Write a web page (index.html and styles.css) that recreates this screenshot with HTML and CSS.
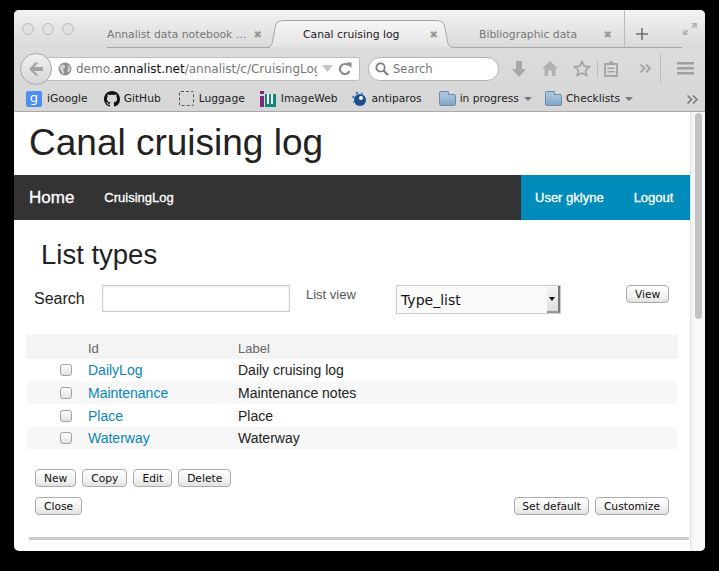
FILE: index.html
```html
<!DOCTYPE html>
<html lang="en">
<head>
    <meta charset="UTF-8">
    <meta name="viewport" content="width=device-width, initial-scale=1.0">
    <title>Canal cruising log</title>
    <link rel="stylesheet" href="styles.css">
</head>
<body>
    <div class="window">
        <div class="chrome">
            <!-- tab strip -->
            <div class="tabstrip">
                <div class="lights"><i></i><i></i><i></i></div>
                <div class="tab tab-first"><span class="tab-title">Annalist data notebook …</span><span class="tab-x">✖</span></div>
                <div class="tab tab-active">
                    <svg class="tab-shape" width="194" height="38" viewBox="0 0 194 38">
                        <defs><linearGradient id="tabfill" x1="0" y1="0" x2="0" y2="1"><stop offset="0" stop-color="#f6f6f6"/><stop offset="1" stop-color="#e4e4e4"/></linearGradient></defs>
                        <path d="M0 37.500H3C8 37.500 9 35 10 29L12 18C13.500 12 15 10.500 23 10.500H171C179 10.500 180.500 12 182 18L184 29C185 35 186 37.500 191 37.500H194" fill="url(#tabfill)" stroke="#a6a6a6"/>
                    </svg>
                    <span class="tab-title">Canal cruising log</span><span class="tab-x">✖</span>
                </div>
                <div class="tab tab-last"><span class="tab-title">Bibliographic data</span><span class="tab-x">✖</span></div>
                <div class="tab-new">
                    <svg width="12" height="12" viewBox="0 0 12 12"><path d="M6 0V12M0 6H12" stroke="#707070" stroke-width="1.600"/></svg>
                </div>
                <svg class="tab-resize" width="16" height="14" viewBox="0 0 16 14">
                    <path d="M9 1H15V6.500L13 4.500L11 6.500L9.500 5L11.500 3Z M1 13V7.500L3 9.500L5 7.500L6.500 9L4.500 11L6.500 13Z" fill="#b4b4b4"/>
                </svg>
            </div>

            <!-- nav bar -->
            <div class="navrow">
                <div class="backbtn">
                    <svg width="16" height="14" viewBox="0 0 16 14"><path d="M7.500 0.500L1 7L7.500 13.500H10.500L6 9H15V5H6L10.500 0.500Z" fill="#a2a2a2"/></svg>
                </div>
                <div class="urlbar">
                    <svg width="14" height="14" viewBox="0 0 14 14"><circle cx="7" cy="7" r="6.500" fill="#8e8e8e"/><path d="M3 3L6 2.500L7.500 5L5 7.500L6.500 10L5.500 12.500L3 9L1.500 6ZM9 3L12 4.500L12.500 8L10 11L9 8L10.500 6Z" fill="#d0d0d0"/></svg>
                    <span class="url"><span class="url-dim">demo.</span>annalist.net<span class="url-dim">/annalist/c/CruisingLog/d/_type/</span></span>
                    <svg class="url-drop" width="11" height="7" viewBox="0 0 11 7"><path d="M0 0H11L5.500 7Z" fill="#c4c4c4"/></svg>
                    <svg class="url-reload" width="14" height="14" viewBox="0 0 14 14"><path d="M11.500 9A5 5 0 1 1 10.500 3.500" fill="none" stroke="#8a8a8a" stroke-width="2.200"/><path d="M8 0.500H13.500V6Z" fill="#8a8a8a"/></svg>
                </div>
                <div class="searchbar">
                    <svg width="14" height="14" viewBox="0 0 14 14"><circle cx="5.500" cy="5.500" r="4.200" fill="none" stroke="#7c7c7c" stroke-width="1.700"/><path d="M8.500 8.500L13 13" stroke="#7c7c7c" stroke-width="2.200"/></svg>
                    <span>Search</span>
                </div>
                <svg class="ico ico-down" width="14" height="16" viewBox="0 0 14 16"><path d="M4 0H10V8H14L7 16L0 8H4Z" fill="#a8a8a8"/></svg>
                <svg class="ico ico-home" width="16" height="15" viewBox="0 0 16 15"><path d="M8 0L16 7.500H13.500V15H10V9.500H6V15H2.500V7.500H0Z" fill="#b0b0b0"/></svg>
                <svg class="ico ico-star" width="18" height="17" viewBox="0 0 18 17"><path d="M9 1.500L11.200 6.200L16.500 6.800L12.600 10.300L13.700 15.500L9 12.900L4.300 15.500L5.400 10.300L1.500 6.800L6.800 6.200Z" fill="none" stroke="#a4a4a4" stroke-width="1.700"/></svg>
                <span class="vsep vsep-short"></span>
                <svg class="ico ico-clip" width="14" height="16" viewBox="0 0 14 16"><path d="M1 3H13V15H1Z" fill="none" stroke="#a4a4a4" stroke-width="1.800"/><path d="M5 0.500H9V4H5ZM3.500 6.500H10.500V8H3.500ZM3.500 10H10.500V11.500H3.500Z" fill="#a4a4a4"/></svg>
                <svg class="ico ico-more" width="12" height="9" viewBox="0 0 12 9"><path d="M0.500 0.500L4.500 4.500L0.500 8.500M6 0.500L10 4.500L6 8.500" fill="none" stroke="#a4a4a4" stroke-width="1.800"/></svg>
                <span class="vsep vsep-tall"></span>
                <svg class="ico ico-menu" width="17" height="13" viewBox="0 0 17 13"><path d="M0 0H17V2.500H0ZM0 5H17V7.500H0ZM0 10H17V12.500H0Z" fill="#a0a0a0"/></svg>
            </div>

            <!-- bookmarks bar -->
            <div class="bookmarks">
                <span class="bm bm-google"><span class="g-icon">g</span>iGoogle</span>
                <span class="bm bm-github">
                    <svg width="16" height="16" viewBox="0 0 16 16"><path d="M8 0C3.580 0 0 3.580 0 8c0 3.540 2.290 6.530 5.470 7.590.4.070.55-.17.55-.38 0-.19-.01-.82-.01-1.490-2.010.37-2.530-.49-2.690-.94-.09-.23-.48-.94-.82-1.130-.28-.15-.68-.52-.01-.53.63-.01 1.080.58 1.230.82.72 1.210 1.870.87 2.330.66.070-.52.28-.87.51-1.070-1.780-.2-3.640-.89-3.640-3.950 0-.87.31-1.590.82-2.150-.08-.2-.36-1.020.08-2.120 0 0 .67-.21 2.200.82.64-.18 1.320-.27 2-.27.68 0 1.360.09 2 .27 1.530-1.040 2.200-.82 2.200-.82.44 1.100.16 1.920.08 2.120.51.56.82 1.270.82 2.150 0 3.070-1.870 3.750-3.650 3.950.29.25.54.73.54 1.480 0 1.070-.01 1.930-.01 2.200 0 .21.15.46.55.38A8.013 8.013 0 0016 8c0-4.420-3.580-8-8-8z" fill="#111"/></svg>
                    GitHub</span>
                <span class="bm bm-luggage"><i class="dash-icon"></i>Luggage</span>
                <span class="bm bm-imageweb">
                    <svg width="16" height="16" viewBox="0 0 16 16"><path d="M0 0H4V3H0ZM0 5H4V16H0Z" fill="#7d2a78"/><path d="M5 3H16V16H5Z" fill="#0f8a7a"/><path d="M7 3V13H9V3ZM11 3V13H13V3Z" fill="#fff"/></svg>
                    ImageWeb</span>
                <span class="bm bm-antiparos">
                    <svg width="16" height="16" viewBox="0 0 16 16"><circle cx="9" cy="9" r="6" fill="#1d4f8c"/><circle cx="2.500" cy="6" r="1.300" fill="#3f7cc0"/><circle cx="6" cy="2" r="1.300" fill="#3f7cc0"/><circle cx="11" cy="2.500" r="1" fill="#3f7cc0"/><circle cx="3" cy="11" r="1" fill="#3f7cc0"/><circle cx="10" cy="7" r="2" fill="#fff"/></svg>
                    antiparos</span>
                <span class="bm bm-folder1"><i class="folder"></i>in progress<i class="caret"></i></span>
                <span class="bm bm-folder2"><i class="folder"></i>Checklists<i class="caret"></i></span>
                <svg class="bm-more" width="12" height="9" viewBox="0 0 12 9"><path d="M0.500 0.500L4.500 4.500L0.500 8.500M6 0.500L10 4.500L6 8.500" fill="none" stroke="#777" stroke-width="1.500"/></svg>
            </div>
        </div>

        <div class="viewport">
            <div class="page">
                <h1 class="site-title">Canal cruising log</h1>

                <nav class="topbar">
                    <a class="home">Home</a>
                    <a class="coll">CruisingLog</a>
                    <div class="topbar-right">
                        <a class="user">User gklyne</a>
                        <a class="logout">Logout</a>
                    </div>
                </nav>

                <h2 class="page-title">List types</h2>

                <div class="search-row">
                    <label class="search-label">Search</label>
                    <input class="search-input" type="text">
                    <span class="view-label">List view</span>
                    <div class="select"><span>Type_list</span><i class="select-arrow"></i></div>
                    <button class="btn btn-view">View</button>
                </div>

                <div class="list">
                    <div class="row row-head"><span class="c-id">Id</span><span class="c-label">Label</span></div>
                    <div class="row"><i class="check"></i><a class="c-id">DailyLog</a><span class="c-label">Daily cruising log</span></div>
                    <div class="row row-alt row-tall"><i class="check"></i><a class="c-id">Maintenance</a><span class="c-label">Maintenance notes</span></div>
                    <div class="row row-tall"><i class="check"></i><a class="c-id">Place</a><span class="c-label">Place</span></div>
                    <div class="row row-alt"><i class="check"></i><a class="c-id">Waterway</a><span class="c-label">Waterway</span></div>
                </div>

                <div class="actions">
                    <button class="btn">New</button>
                    <button class="btn">Copy</button>
                    <button class="btn">Edit</button>
                    <button class="btn">Delete</button>
                </div>
                <div class="actions-2">
                    <button class="btn">Close</button>
                    <div class="actions-right">
                        <button class="btn btn-slim">Set default</button>
                        <button class="btn">Customize</button>
                    </div>
                </div>
                <div class="rule"></div>
            </div>
            <div class="scrollbar"><div class="thumb"></div></div>
        </div>
    </div>
</body>
</html>
```

FILE: styles.css
```css
html, body {
    margin: 0;
    padding: 0;
    background: #000;
    overflow: hidden;
}

body {
    height: 571px;
    font-family: 'Liberation Sans', Arial, sans-serif;
}

.window {
    width: 691px;
    height: 541px;
    margin: 10px 0 0 14px;
    border-radius: 5px;
    overflow: hidden;
    background: #fff;
}

/* browser chrome */
.chrome {
    height: 102px;
    box-sizing: border-box;
    border-bottom: 1px solid #aaa;
    background: linear-gradient(#f2f2f2, #dadada 37%, #dcdcdc 38%, #d6d6d6);
    font-family: 'DejaVu Sans', sans-serif;
    font-size: 11px;
    color: #333;
}

.tabstrip {
    display: flex;
    align-items: center;
    height: 38px;
    box-sizing: border-box;
    position: relative;
}

.lights {
    display: flex;
    gap: 8px;
    margin-left: 8px;
    width: 85px;
}

.lights i {
    width: 10px;
    height: 10px;
    border-radius: 50%;
    border: 1px solid #b9b9b9;
    background: #e2e2e2;
}

.tab {
    display: flex;
    align-items: center;
    height: 38px;
    box-sizing: border-box;
    padding-top: 11px;
    color: #777;
    position: relative;
    white-space: nowrap;
}

.tab-title {
    position: relative;
    font-size: 10.8px;
}

.tab-x {
    position: relative;
    font-size: 10px;
    color: #999;
    margin-left: auto;
}

.tab-first {
    width: 163px;
    padding-right: 8px;
    border-bottom: 1px solid #a6a6a6;
}

.tab-active {
    width: 194px;
    padding-left: 40px;
    padding-right: 19px;
    margin-left: -7px;
    color: #222;
}

.tab-shape {
    position: absolute;
    left: 0;
    top: 0;
}

.tab-last {
    width: 169px;
    padding-left: 23px;
    padding-right: 12px;
    margin-left: -1px;
    border-bottom: 1px solid #a6a6a6;
    border-right: 1px solid #bbb;
}

.tab-new {
    display: flex;
    align-items: center;
    height: 38px;
    box-sizing: border-box;
    padding: 10px 0 0 11px;
    width: 57px;
    border-bottom: 1px solid #a6a6a6;
}

.tab-resize {
    margin: 0;
}

.navrow {
    display: flex;
    align-items: center;
    box-sizing: border-box;
    height: 36px;
    padding-top: 5px;
}

.backbtn {
    display: flex;
    align-items: center;
    justify-content: center;
    box-sizing: border-box;
    flex: none;
    width: 32px;
    height: 32px;
    margin-left: 6px;
    border: 1px solid #a8a8a8;
    border-radius: 50%;
    background: linear-gradient(#f0f0f0, #d6d6d6);
    position: relative;
    z-index: 1;
}

.urlbar {
    display: flex;
    align-items: center;
    box-sizing: border-box;
    width: 313px;
    height: 24px;
    margin-left: -5px;
    padding-left: 10px;
    background: #fff;
    border: 1px solid #bcbcbc;
    border-radius: 0 3px 3px 0;
}

.url {
    width: 241px;
    margin-left: 4px;
    overflow: hidden;
    white-space: nowrap;
    font-size: 12px;
    color: #111;
}

.url-dim {
    color: #777;
}

.url-drop {
    margin-left: 5px;
}

.url-reload {
    margin-left: 5px;
}

.searchbar {
    display: flex;
    align-items: center;
    gap: 4px;
    box-sizing: border-box;
    width: 131px;
    height: 24px;
    margin-left: 8px;
    padding-left: 6px;
    background: #fff;
    border: 1px solid #b4b4b4;
    border-radius: 12px;
    font-size: 11.500px;
    color: #777;
}

.ico-down { margin-left: 13px; }
.ico-home { margin-left: 16px; }
.ico-star { margin-left: 15px; }
.ico-clip { margin-left: 6px; }
.ico-more { margin-left: 22px; }
.ico-menu { margin-left: 16px; }

.vsep {
    width: 1px;
    background: #bdbdbd;
}

.vsep-short {
    height: 18px;
    margin-left: 6px;
}

.vsep-tall {
    height: 31px;
    margin-left: 8px;
}

.bookmarks {
    display: flex;
    align-items: center;
    box-sizing: border-box;
    height: 27px;
    padding-top: 2px;
    position: relative;
    white-space: nowrap;
    font-size: 10.700px;
    color: #222;
}

.bm {
    display: flex;
    align-items: center;
    gap: 5px;
}

.bm-google { margin-left: 12px; }
.bm-github { margin-left: 16px; gap: 4px; }
.bm-luggage { margin-left: 18px; }
.bm-imageweb { margin-left: 15px; }
.bm-antiparos { margin-left: 13px; }
.bm-folder1 { margin-left: 17px; gap: 4px; }
.bm-folder2 { margin-left: 13px; gap: 4px; }

.g-icon {
    display: block;
    width: 16px;
    height: 16px;
    border-radius: 2px;
    background: #4b8df0;
    color: #fff;
    text-align: center;
    font-size: 13px;
    line-height: 14px;
}

.dash-icon {
    display: block;
    width: 13px;
    height: 13px;
    border: 1px dashed #555;
    border-radius: 2px;
}

.folder {
    display: block;
    width: 17px;
    height: 12px;
    margin-top: 2px;
    border: 1px solid #6e8daa;
    box-sizing: border-box;
    border-radius: 1px 2px 2px 2px;
    background: linear-gradient(#a9c5dd, #7fa5c6);
    position: relative;
}

.folder::before {
    content: "";
    position: absolute;
    left: -1px;
    top: -4px;
    width: 8px;
    height: 3px;
    border: 1px solid #6e8daa;
    border-bottom: none;
    border-radius: 2px 2px 0 0;
    background: #a9c5dd;
}

.caret {
    display: block;
    width: 0;
    height: 0;
    margin-left: 1px;
    border-left: 4px solid transparent;
    border-right: 4px solid transparent;
    border-top: 4px solid #777;
}

.bm-more {
    position: absolute;
    left: 673px;
    top: 11px;
}

/* page */
.viewport {
    display: flex;
    height: 439px;
}

.page {
    width: 676px;
    overflow: hidden;
    color: #222;
}

.site-title {
    margin: 0;
    padding-left: 15px;
    height: 63px;
    font-size: 37px;
    font-weight: normal;
    line-height: 61px;
}

.topbar {
    display: flex;
    align-items: center;
    height: 45px;
    padding-left: 15px;
    background: #333;
    color: #fff;
}

.home {
    font-size: 17px;
    -webkit-text-stroke: 0.300px #fff;
}

.coll {
    margin-left: 30px;
    font-size: 13px;
    -webkit-text-stroke: 0.300px #fff;
}

.topbar-right {
    display: flex;
    align-items: center;
    height: 45px;
    width: 169px;
    box-sizing: border-box;
    padding-left: 14px;
    margin-left: auto;
    background: #008cba;
    font-size: 13px;
    -webkit-text-stroke: 0.300px #fff;
}

.logout {
    margin-left: 30px;
}

.page-title {
    margin: 0;
    padding: 20px 0 0 27px;
    height: 65px;
    box-sizing: border-box;
    font-size: 27.500px;
    font-weight: normal;
    line-height: 30px;
}

.search-row {
    display: flex;
    align-items: flex-start;
    height: 49px;
    padding-left: 20px;
}

.search-label {
    width: 68px;
    font-size: 16px;
    line-height: 27px;
}

.search-input {
    width: 188px;
    height: 27px;
    box-sizing: border-box;
    margin: 0;
    padding: 0;
    border: 1px solid #ccc;
    background: #fff;
    box-shadow: inset 0 1px 2px rgba(0, 0, 0, 0.1);
}

.view-label {
    width: 90px;
    margin-left: 16px;
    font-size: 13px;
    line-height: 20px;
    color: #555;
}

.select {
    display: flex;
    align-items: center;
    justify-content: space-between;
    box-sizing: border-box;
    width: 165px;
    height: 29px;
    padding-left: 4px;
    border: 1px solid #ccc;
    background: #fafafa;
    font-family: 'DejaVu Sans', sans-serif;
    font-size: 14px;
    color: #111;
}

.select-arrow {
    display: block;
    box-sizing: border-box;
    width: 13px;
    height: 27px;
    padding: 0;
    background: linear-gradient(#f4f4f4, #ddd);
    border-right: 2px solid #777;
    border-bottom: 2px solid #999;
    position: relative;
}

.select-arrow::after {
    content: "";
    position: absolute;
    left: 2px;
    top: 11px;
    border-left: 3px solid transparent;
    border-right: 3px solid transparent;
    border-top: 4px solid #111;
}

.btn {
    height: 18px;
    box-sizing: border-box;
    margin: 0;
    padding: 0 8px;
    border: 1px solid #ababab;
    border-radius: 4px;
    background: linear-gradient(#fff, #f2f2f2 60%, #e2e2e2);
    font-family: 'DejaVu Sans', sans-serif;
    font-size: 10.700px;
    line-height: 15px;
    color: #111;
}

.btn-view {
    margin-left: 65px;
}

.btn-slim {
    padding: 0 7px;
}

.list {
    margin-left: 12px;
    width: 652px;
    font-size: 14px;
}

.row {
    display: flex;
    align-items: center;
    height: 22px;
    padding-left: 34px;
    color: #222;
}

.row-tall {
    height: 23px;
}

.row-head {
    height: 25px;
    padding-left: 62px;
    padding-top: 4px;
    box-sizing: border-box;
    background: #f4f4f4;
    font-size: 13px;
    color: #666;
}

.row-alt {
    background: #f7f7f7;
}

.check {
    display: block;
    box-sizing: border-box;
    width: 12px;
    height: 12px;
    margin-right: 16px;
    border: 1px solid #a0a0a0;
    border-radius: 3px;
    background: linear-gradient(#fff, #e2e2e2);
}

.c-id {
    width: 150px;
}

a.c-id {
    color: #0a85b5;
}

.actions {
    display: flex;
    gap: 6px;
    margin: 20px 0 0 21px;
}

.actions-2 {
    display: flex;
    margin: 10px 21px 0 21px;
}

.actions-right {
    display: flex;
    gap: 6px;
    margin-left: auto;
}

.rule {
    height: 3px;
    margin: 22px 1px 0 15px;
    background: #ccc;
}

.scrollbar {
    flex: 1;
    padding: 1px 3px 0 4px;
    background: linear-gradient(90deg, #f0f0f0, #fafafa 30%, #f8f8f8);
    border-left: 1px solid #e4e4e4;
}

.thumb {
    height: 206px;
    border-radius: 4px;
    background: #c2c2c2;
}
```
